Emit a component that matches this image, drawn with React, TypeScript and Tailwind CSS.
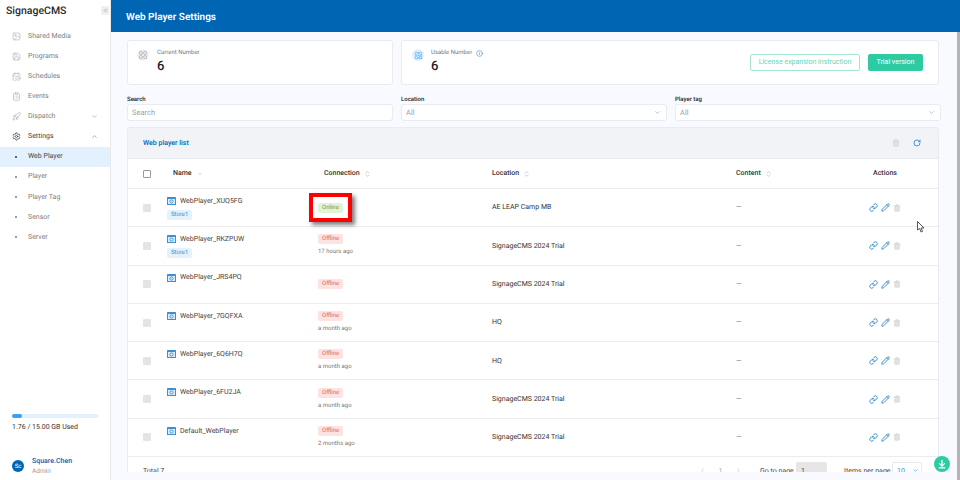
import React from "react";
import { Image, Save, CalendarClock, ClipboardList, Rocket, Settings, ChevronDown, ChevronUp, ChevronsLeft, Info, Trash2, Link, Pencil, ChevronsUpDown, ChevronLeft, ChevronRight, ArrowDownToLine, Atom, RotateCw } from "lucide-react";

const menu = [
  { label: "Shared Media", Icon: Image },
  { label: "Programs", Icon: Save },
  { label: "Schedules", Icon: CalendarClock },
  { label: "Events", Icon: ClipboardList },
];
const sub = ["Web Player", "Player", "Player Tag", "Sensor", "Server"];
const rows = [
  { name: "WebPlayer_XUQ5FG", tag: "Store1", online: true, ago: "", loc: "AE LEAP Camp MB" },
  { name: "WebPlayer_RKZPUW", tag: "Store1", online: false, ago: "17 hours ago", loc: "SignageCMS 2024 Trial" },
  { name: "WebPlayer_JRS4PQ", tag: "", online: false, ago: "", loc: "SignageCMS 2024 Trial" },
  { name: "WebPlayer_7GQFXA", tag: "", online: false, ago: "a month ago", loc: "HQ" },
  { name: "WebPlayer_6Q6H7Q", tag: "", online: false, ago: "a month ago", loc: "HQ" },
  { name: "WebPlayer_6FU2JA", tag: "", online: false, ago: "a month ago", loc: "SignageCMS 2024 Trial" },
  { name: "Default_WebPlayer", tag: "", online: false, ago: "2 months ago", loc: "SignageCMS 2024 Trial" },
];
const grid = "grid grid-cols-[39px_151px_174px_244px_115px_1fr]";

function Field({ label, value, select }: { label: string; value: string; select?: boolean }) {
  return (
    <div className="flex flex-col w-[266px]">
      <div className="h-[9px] text-[6px] leading-[9px] text-[#222] font-medium">{label}</div>
      <div className="h-[17px] bg-white border border-[#e8ebf0] rounded-[3px] flex items-center justify-between pl-[4px] pr-[5px] text-[7.5px] text-[#a0a0a0]">
        <span>{value}</span>
        {select && <ChevronDown className="w-[7px] h-[7px] text-[#999]" />}
      </div>
    </div>
  );
}

function Head({ label, sort }: { label: string; sort?: boolean }) {
  return (
    <div className="flex items-center gap-[4px] text-[7px] text-[#333] font-medium">
      <span>{label}</span>
      {sort && <ChevronsUpDown className="w-[7px] h-[8px] text-[#aaa]" />}
    </div>
  );
}

function PlayerIcon() {
  return (
    <svg className="w-[9px] h-[8px] shrink-0" viewBox="0 0 9 8">
      <rect x="0" y="0" width="9" height="8" rx="0.6" fill="#3d8fd1" />
      <rect x="1" y="2" width="7" height="5" fill="#dbeeff" />
      <circle cx="4.5" cy="4.5" r="1.6" fill="none" stroke="#3d8fd1" strokeWidth="0.9" />
    </svg>
  );
}

function GridIcon() {
  return (
    <svg className="w-[8px] h-[8px]" viewBox="0 0 8 8" fill="none" stroke="#aaa" strokeWidth="0.8">
      <rect x="0.5" y="0.5" width="2.8" height="2.8" rx="0.8" />
      <rect x="4.7" y="0.5" width="2.8" height="2.8" rx="0.8" />
      <rect x="0.5" y="4.7" width="2.8" height="2.8" rx="0.8" />
      <rect x="4.7" y="4.7" width="2.8" height="2.8" rx="0.8" />
    </svg>
  );
}

export default function App() {
  return (
    <div className="relative w-[960px] h-[480px] overflow-hidden flex bg-[#f8faff] font-['Roboto',sans-serif] [text-rendering:geometricPrecision]">
      <aside className="w-[111px] shrink-0 h-full bg-white border-r border-[#e8e8e8] flex flex-col">
        <div className="h-[20px] flex items-center justify-between pl-[6px] pt-[1px]">
          <span className="text-[10.5px] font-medium text-[#2b2b2b]">SignageCMS</span>
          <span className="w-[8px] h-[9px] bg-[#f0f0f0] flex items-center justify-center mr-[1px]">
            <ChevronsLeft className="w-[7px] h-[7px] text-[#999]" />
          </span>
        </div>
        <nav className="mt-[6px] flex flex-col text-[7px] text-[#808080]">
          {menu.map(({ label, Icon }) => (
            <div key={label} className="h-[20.1px] flex items-center pl-[12px] gap-[7px]">
              <Icon className="w-[9px] h-[9px] text-[#bbb]" />
              <span>{label}</span>
            </div>
          ))}
          <div className="h-[20.1px] flex items-center pl-[12px] gap-[7px]">
            <Rocket className="w-[9px] h-[9px] text-[#bbb]" />
            <span className="flex-1">Dispatch</span>
            <ChevronDown className="w-[7px] h-[7px] text-[#999] mr-[12px]" />
          </div>
          <div className="h-[20.1px] flex items-center pl-[12px] gap-[7px] text-[#444]">
            <Settings className="w-[9px] h-[9px]" />
            <span className="flex-1">Settings</span>
            <ChevronUp className="w-[7px] h-[7px] text-[#777] mr-[12px]" />
          </div>
          {sub.map((s, i) => (
            <div key={s} className={`h-[20.1px] flex items-center pl-[15px] gap-[11px] ${i === 0 ? "bg-[#e3f0fd] text-[#444]" : ""}`}>
              <span className={`w-[2px] h-[2px] rounded-full ${i === 0 ? "bg-[#333]" : "bg-[#777]"}`} />
              <span>{s}</span>
            </div>
          ))}
        </nav>
        <div className="mt-auto pl-[12px] pr-[12px]">
          <div className="h-[4px] rounded-full bg-[#e3f0fd]">
            <div className="h-full w-[10px] rounded-full bg-[#3aa0ef]" />
          </div>
          <div className="mt-[4px] text-[7px] leading-[10px] text-[#333]">1.76 / 15.00 GB Used</div>
          <div className="mt-[24px] mb-[4px] flex items-center gap-[8px]">
            <div className="w-[12px] h-[12px] rounded-full bg-[#0065b3] text-white text-[6px] flex items-center justify-center">Sc</div>
            <div className="flex flex-col">
              <span className="text-[7px] leading-[10px] text-[#0065b3] font-medium">Square.Chen</span>
              <span className="text-[6.5px] leading-[10px] text-[#999]">Admin</span>
            </div>
          </div>
        </div>
      </aside>

      <main className="flex-1 min-w-0 flex flex-col">
        <header className="h-[32px] shrink-0 bg-[#0065b3] flex items-center pl-[15px] pt-[2px] text-white text-[10px] font-semibold">Web Player Settings</header>
        <div className="flex-1 min-h-0 overflow-hidden pl-[16px] pt-[8px] mb-[8px]">
          <div className="flex gap-[8px] w-[812px]">
            <div className="w-[266px] h-[45px] bg-white border border-[#e8ebf0] rounded-[3px] flex pl-[9px] pt-[7px] gap-[8px]">
              <div className="w-[12px] h-[12px] rounded-full bg-[#f0f0f0] flex items-center justify-center mt-[1px]">
                <GridIcon />
              </div>
              <div className="flex flex-col">
                <span className="text-[6px] leading-[10px] text-[#777]">Current Number</span>
                <span className="text-[13px] leading-[17px] font-medium text-[#222]">6</span>
              </div>
            </div>
            <div className="flex-1 h-[45px] bg-white border border-[#e8ebf0] rounded-[3px] flex pl-[10px] pt-[7px] gap-[7px]">
              <div className="w-[12px] h-[12px] rounded-full bg-[#e3f0fd] flex items-center justify-center mt-[1px]">
                <Atom className="w-[9px] h-[9px] text-[#52aef5]" />
              </div>
              <div className="flex flex-col flex-1">
                <span className="flex items-center gap-[4px] text-[6px] leading-[10px] text-[#777]">Usable Number <Info className="w-[7px] h-[7px] text-[#3b8fd6]" /></span>
                <span className="text-[13px] leading-[17px] font-medium text-[#222]">6</span>
              </div>
              <div className="flex gap-[8px] self-center -mt-[7px] pr-[15px]">
                <button className="h-[17px] w-[110px] rounded-[2px] border border-[#a5e6d3] text-[7px] text-[#66d6b6] bg-white">License expansion instruction</button>
                <button className="h-[17px] w-[55px] rounded-[2px] bg-[#2ecba3] text-[7px] text-white">Trial version</button>
              </div>
            </div>
          </div>

          <div className="mt-[9px] flex gap-[8px] pt-[1px]">
            <Field label="Search" value="Search" />
            <Field label="Location" value="All" select />
            <Field label="Player tag" value="All" select />
          </div>

          <section className="mt-[6px] w-[812px] bg-white border border-[#e8ebf0] rounded-[3px]">
            <div className="h-[31px] bg-[#f1f3f6] border-b border-[#e8ebf0] flex items-center pl-[15px] pr-[17px]">
              <span className="flex-1 text-[7px] font-medium text-[#0065b3]">Web player list</span>
              <Trash2 className="w-[8px] h-[8px] text-[#d4d4d4] fill-[#e2e2e2]" />
              <RotateCw className="w-[8px] h-[8px] text-[#4a98d8] ml-[13px]" strokeWidth={3} />
            </div>
            <div className={`${grid} h-[30px] items-center border-b border-[#ececec]`}>
              <div className="pl-[15px]"><div className="w-[8px] h-[8px] border border-[#999] rounded-[1px] bg-white" /></div>
              <div className="pl-[6px] flex items-center gap-[5px] text-[7px] font-medium text-[#333]">Name <ChevronDown className="w-[6px] h-[6px] text-[#aaa]" /></div>
              <div className="pl-[6px]"><Head label="Connection" sort /></div>
              <Head label="Location" sort />
              <Head label="Content" sort />
              <div className="pl-[22px]"><Head label="Actions" /></div>
            </div>
            {rows.map((r) => (
              <div key={r.name} className={`${grid} h-[38.3px] items-center border-b border-[#ececec] text-[7px] text-[#444]`}>
                <div className="pl-[15px]"><div className="w-[8px] h-[8px] rounded-[1px] bg-[#e4e4e4]" /></div>
                <div className="self-start pt-[7px]">
                  <div className="flex items-center gap-[4px] h-[10px]">
                    <PlayerIcon />
                    <span>{r.name}</span>
                  </div>
                  {r.tag && <span className="mt-[4px] inline-block h-[10px] leading-[10px] px-[4px] rounded-[2px] bg-[#e3f2fd] text-[#3c8fd0] text-[6px]">{r.tag}</span>}
                </div>
                <div className="relative flex flex-col items-start justify-center">
                  <span className={`h-[10px] leading-[10px] px-[4px] rounded-[2px] text-[6px] ${r.online ? "bg-[#e2f2d8] text-[#6a9a50]" : "bg-[#fde2e2] text-[#d86a6a]"}`}>{r.online ? "Online" : "Offline"}</span>
                  {r.ago && <span className="mt-[3px] text-[6px] leading-[10px] text-[#777]">{r.ago}</span>}
                  {r.online && <span className="absolute left-[-9px] top-[-10px] w-[43px] h-[29px] border-[4px] border-[#ff0000] shadow-[3px_3px_4px_rgba(0,0,0,0.5)]" />}
                </div>
                <div className="text-[#333]">{r.loc}</div>
                <div className="text-[#777]">—</div>
                <div className="pl-[18px] flex items-center gap-[3px]">
                  <Link className="w-[9px] h-[9px] text-[#3d8fd1]" strokeWidth={2.6} />
                  <Pencil className="w-[9px] h-[9px] text-[#3d8fd1]" strokeWidth={2.6} />
                  <Trash2 className="w-[8px] h-[8px] text-[#d4d4d4] fill-[#e2e2e2]" />
                </div>
              </div>
            ))}
            <div className="h-[30px] flex items-start pt-[9px] pl-[15px] text-[7px] leading-[10px] text-[#444] whitespace-nowrap">
              <span className="flex-1">Total 7</span>
              <ChevronLeft className="w-[7px] h-[7px] mt-[1px] text-[#bbb]" />
              <span className="w-[29px] text-center text-[#aaa]">1</span>
              <ChevronRight className="w-[7px] h-[7px] mt-[1px] text-[#bbb]" />
              <span className="ml-[18px] w-[36px]">Go to page</span>
              <span className="w-[31px] h-[14px] -mt-[4px] pt-[4px] pl-[5px] bg-[#e6e6e6] rounded-[2px]">1</span>
              <span className="ml-[17px] w-[48px]">Items per page</span>
              <span className="mr-[16px] w-[30px] h-[14px] -mt-[4px] pt-[3px] pl-[4px] bg-white border border-[#e8ebf0] rounded-[2px] text-[#3d8fd1] flex justify-between pr-[2px]">10 <ChevronDown className="w-[7px] h-[7px] mt-[1px]" /></span>
            </div>
          </section>
        </div>
      </main>

      <div className="absolute right-0 top-[32px] bottom-0 w-[3.5px] bg-[#b5b5b5]" />
      <button className="absolute left-[934px] top-[456px] w-[16px] h-[16px] rounded-full bg-[#2ecba3] flex items-center justify-center">
        <ArrowDownToLine className="w-[10px] h-[10px] text-white" strokeWidth={3} />
      </button>
      <svg className="absolute left-[917px] top-[221px]" width="8" height="12" viewBox="0 0 8 12">
        <path d="M0.5 0.5 L0.5 9 L2.6 7.4 L4 11 L5.5 10.4 L4.1 7 L7 7 Z" fill="#fff" stroke="#555" strokeWidth="1" />
      </svg>
    </div>
  );
}
